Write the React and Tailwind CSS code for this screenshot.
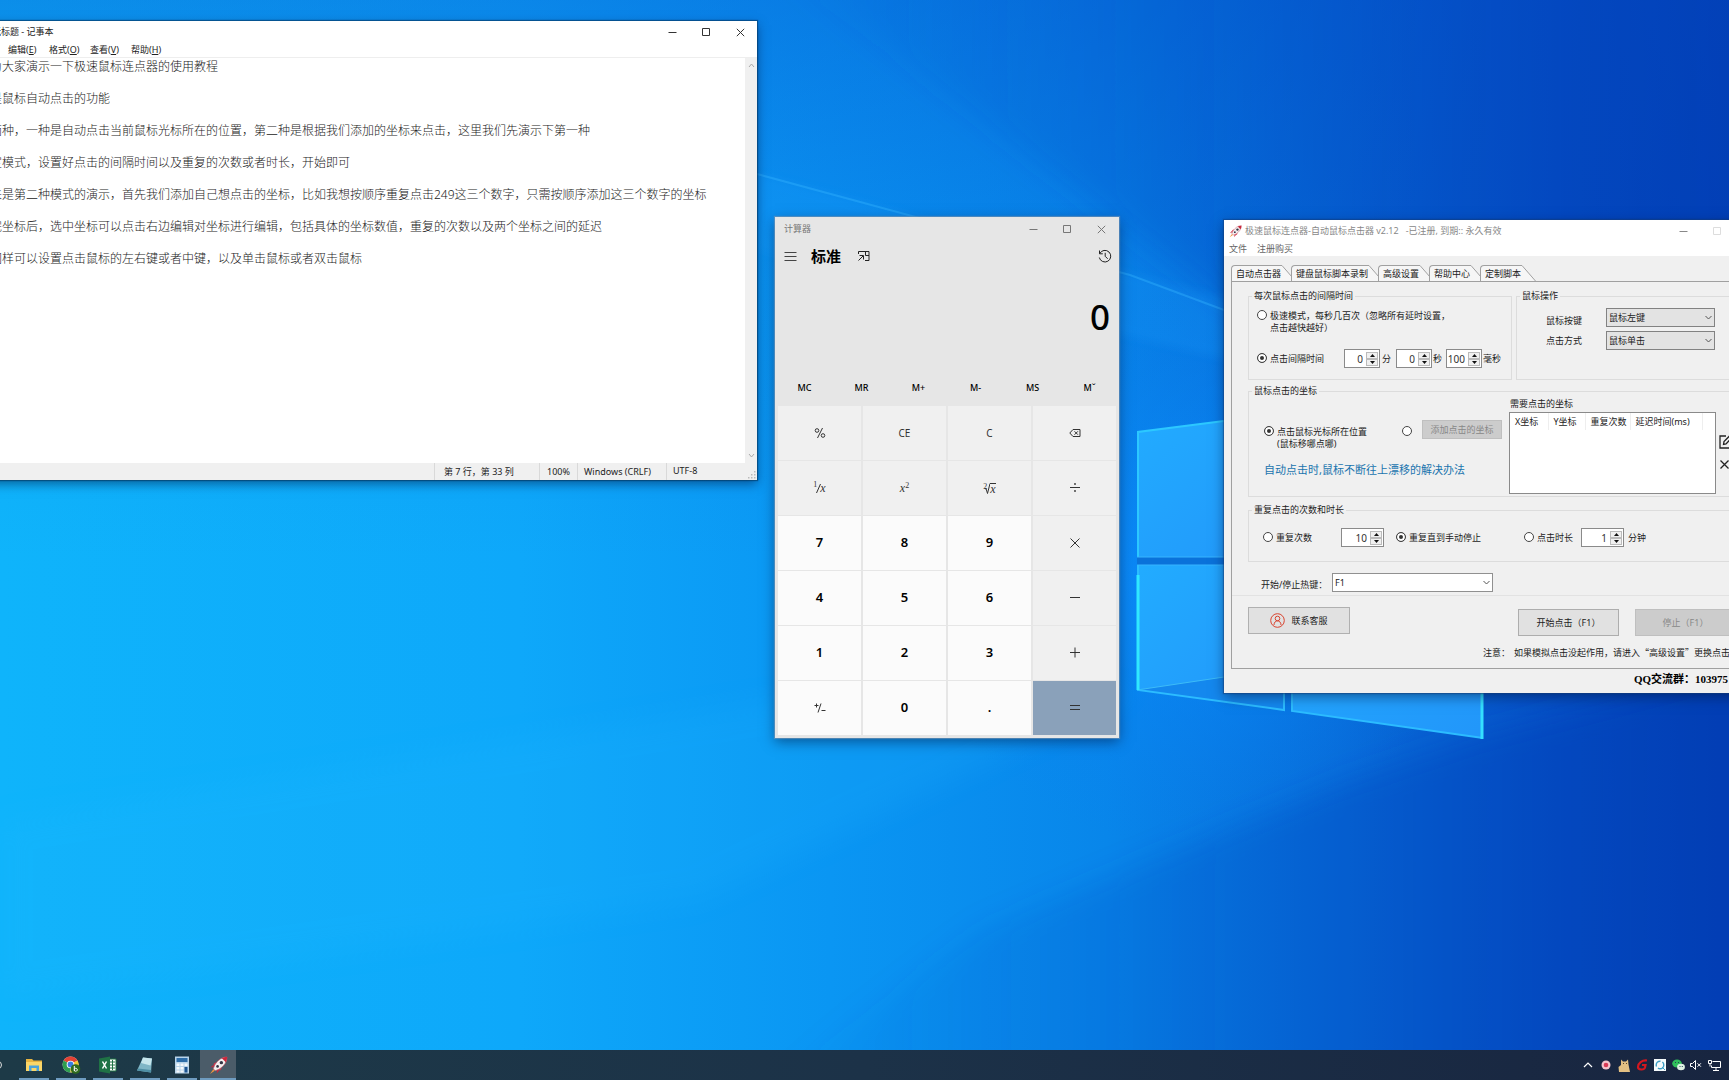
import React from "react";

const NOTE_TEXT = [
  "今天为大家演示一下极速鼠标连点器的使用教程",
  "首先是鼠标自动点击的功能",
  "分为两种，一种是自动点击当前鼠标光标所在的位置，第二种是根据我们添加的坐标来点击，这里我们先演示下第一种",
  "先选定模式，设置好点击的间隔时间以及重复的次数或者时长，开始即可",
  "接下来是第二种模式的演示，首先我们添加自己想点击的坐标，比如我想按顺序重复点击249这三个数字，只需按顺序添加这三个数字的坐标",
  "添加完坐标后，选中坐标可以点击右边编辑对坐标进行编辑，包括具体的坐标数值，重复的次数以及两个坐标之间的延迟",
  "我们同样可以设置点击鼠标的左右键或者中键，以及单击鼠标或者双击鼠标",
].join("\n\n");

function Wallpaper() {
  return (
    <svg
      className="absolute inset-0 h-full w-full"
      viewBox="0 0 1729 1050"
      preserveAspectRatio="xMidYMid slice"
      aria-hidden="true"
    >
      <defs>
        <linearGradient id="base" x1="0" y1="0" x2="1" y2="0">
          <stop offset="0" stopColor="#0fb4fb" />
          <stop offset="0.3" stopColor="#0ea8fa" />
          <stop offset="0.48" stopColor="#0a96f3" />
          <stop offset="0.64" stopColor="#0886ea" />
          <stop offset="0.78" stopColor="#076ad8" />
          <stop offset="0.9" stopColor="#0550c6" />
          <stop offset="1" stopColor="#0442b8" />
        </linearGradient>
        <linearGradient id="top" x1="0" y1="0" x2="0" y2="1">
          <stop offset="0" stopColor="#0550cc" stopOpacity="0.38" />
          <stop offset="0.5" stopColor="#0550cc" stopOpacity="0.1" />
          <stop offset="1" stopColor="#0550cc" stopOpacity="0" />
        </linearGradient>
        <radialGradient id="glow" cx="0.5" cy="0.5" r="0.5">
          <stop offset="0" stopColor="#0c8cff" stopOpacity="0.8" />
          <stop offset="1" stopColor="#0a80f0" stopOpacity="0" />
        </radialGradient>
        <linearGradient id="shade" x1="0" y1="0" x2="1" y2="0">
          <stop offset="0" stopColor="#0448c0" stopOpacity="0" />
          <stop offset="0.5" stopColor="#0448c0" stopOpacity="0.3" />
          <stop offset="1" stopColor="#0338ae" stopOpacity="0.5" />
        </linearGradient>
        <linearGradient id="pane" x1="0" y1="0" x2="1" y2="1">
          <stop offset="0" stopColor="#22acff" />
          <stop offset="1" stopColor="#2296fa" />
        </linearGradient>
        <filter id="soft" x="-10%" y="-10%" width="120%" height="120%">
          <feGaussianBlur stdDeviation="14" />
        </filter>
        <filter id="haze" x="-20%" y="-20%" width="140%" height="140%">
          <feGaussianBlur stdDeviation="4" />
        </filter>
      </defs>
      <rect width="1729" height="1050" fill="url(#base)" />
      <rect width="1729" height="560" fill="url(#top)" />
      <ellipse cx="1190" cy="570" rx="280" ry="280" fill="url(#glow)" />
      <polygon points="757,-40 1769,-40 1769,480 1224,300 900,60" fill="url(#shade)" filter="url(#soft)" />
      <polygon points="1484,735 1345,782 980,930 760,1090 1769,1090 1769,660" fill="url(#shade)" filter="url(#soft)" />
      <polygon points="757,174 1230,300 1230,360 757,250" fill="#1aa0ff" opacity="0.2" filter="url(#haze)" />
      <polyline points="757,174 1130,275 1224,310" fill="none" stroke="#35b4ff" strokeOpacity="0.4" strokeWidth="2" />
      <polygon points="0,820 775,700 1137,690 700,900 0,1000" fill="#20b8ff" opacity="0.16" filter="url(#soft)" />
      <polygon points="1137,432 1300,411 1300,557 1137,557" fill="url(#pane)" />
      <polygon points="1137,565 1284,565 1284,710 1137,690" fill="url(#pane)" />
      <polygon points="1292,565 1483,565 1483,738 1292,711" fill="url(#pane)" />
      <polygon points="1137,557 1300,557 1300,565 1137,565" fill="#0a72da" />
      <polygon points="1137,690 1224,677 1284,680 1284,710" fill="#1488ee" />
      <path d="M1137 690L1224 677" stroke="#3cbcf8" fill="none" />
      <path d="M1138 557V432L1224 421" stroke="#2cc8ff" strokeWidth="2" fill="none" />
      <path d="M1137 557H1224M1137 565H1224" stroke="#36b4ff" fill="none" />
      <path d="M1138 565V690L1284 710V680" stroke="#2cbcff" strokeWidth="2" fill="none" />
      <path d="M1292 680V711L1483 738" stroke="#2cbcff" strokeWidth="2" fill="none" />
      <path d="M1482 680V739" stroke="#34e0ff" strokeWidth="3" fill="none" />
      <path d="M1138 575V690" stroke="#30e8ff" strokeWidth="3" />
    </svg>
  );
}

function Caption({ tone = "text-[#333]", maxTone }) {
  const cell = "flex h-5 w-[34px] items-center justify-center";
  return (
    <div className={`flex ${tone}`}>
      <button className={cell} aria-label="最小化">
        <svg width="9" height="9" viewBox="0 0 9 9" stroke="currentColor" fill="none"><path d="M0.5 4.5h8" /></svg>
      </button>
      <button className={`${cell} ${maxTone || ""}`} aria-label="最大化">
        <svg width="9" height="9" viewBox="0 0 9 9" stroke="currentColor" fill="none"><path d="M0.5 0.5h7v7h-7z" /></svg>
      </button>
      <button className={cell} aria-label="关闭">
        <svg width="9" height="9" viewBox="0 0 9 9" stroke="currentColor" fill="none"><path d="M0.800 0.800l7.400 7.400M8.200 0.800L0.800 8.200" /></svg>
      </button>
    </div>
  );
}

function Notepad() {
  const menus = [["文件", "F"], ["编辑", "E"], ["格式", "O"], ["查看", "V"], ["帮助", "H"]];
  return (
    <section className="absolute top-[21px] -left-[38px] flex h-[459px] w-[795px] flex-col bg-white text-[9px] leading-3 text-[#222] shadow-[0_0_1px_1px_rgba(0,50,90,0.55),0_4px_10px_rgba(0,20,60,0.5)]">
      <header className="flex h-[22px] items-center">
        <svg className="mx-1.5" width="12" height="12" viewBox="0 0 12 12"><path d="M3 1h7l-1 9H1z" fill="#7cc4d8" /></svg>
        <h1 className="grow pl-1.5">无标题 - 记事本</h1>
        <Caption />
      </header>
      <nav className="flex h-[15px] items-center gap-[11px] border-b border-[#eee] pl-[5px]">
        {menus.map(([name, key]) => (
          <button key={key} className="w-[30px] text-left whitespace-nowrap">
            {name}(<u>{key}</u>)
          </button>
        ))}
      </nav>
      <div className="flex min-h-0 grow">
        <textarea
          aria-label="文本编辑器"
          defaultValue={NOTE_TEXT}
          wrap="off"
          className="grow resize-none overflow-hidden bg-white pt-px pl-1 text-xs leading-4 font-light text-[#1a1a1a] outline-none"
        />
        <div className="flex w-3 flex-col items-center justify-between bg-[#f0f0f0] py-1 text-[#aaa]">
          <svg width="7" height="7" viewBox="0 0 7 7" stroke="currentColor" fill="none"><path d="M1 5l2.500-3L6 5" /></svg>
          <svg width="7" height="7" viewBox="0 0 7 7" stroke="currentColor" fill="none"><path d="M1 2l2.500 3L6 2" /></svg>
        </div>
      </div>
      <footer className="flex h-[17px] items-stretch justify-end bg-[#f0f0f0] leading-[18px]">
        <span className="w-[105px] border-l border-[#d9d9d9] pl-[9px]">第 7 行，第 33 列</span>
        <span className="w-[38px] border-l border-[#d9d9d9] pl-[7px]">100%</span>
        <span className="w-[89px] border-l border-[#d9d9d9] pl-1.5">Windows (CRLF)</span>
        <span className="flex w-[91px] items-end justify-between border-l border-[#d9d9d9] pl-1.5">
          UTF-8
          <svg width="9" height="9" viewBox="0 0 9 9" fill="#bbb">
            <path d="M6 0h1.500v1.500H6zM3 3h1.500v1.500H3zM6 3h1.500v1.500H6zM0 6h1.500v1.500H0zM3 6h1.500v1.500H3zM6 6h1.500v1.500H6z" />
          </svg>
        </span>
      </footer>
    </section>
  );
}

const opIcon = (d) => (
  <svg width="12" height="12" viewBox="0 0 12 12" stroke="currentColor" strokeWidth="1" fill="none"><path d={d} /></svg>
);

const KEYS = [
  { n: "百分号", op: 1, c: <svg width="12" height="12" viewBox="0 0 12 12" stroke="currentColor" fill="none"><circle cx="3" cy="3.500" r="1.800" /><circle cx="9" cy="8.500" r="1.800" /><path d="M8.500 1L3.500 11" /></svg> },
  { n: "清除条目", op: 1, c: "CE" },
  { n: "清除", op: 1, c: "C" },
  { n: "退格", op: 1, c: <svg width="12" height="12" viewBox="0 0 12 12" stroke="currentColor" fill="none"><path d="M4 2.500h7v7H4L0.800 6zM5.500 4.300l3.400 3.400M8.900 4.300L5.500 7.700" /></svg> },
  { n: "倒数", op: 1, c: <span className="flex items-center font-['Liberation_Serif',serif]"><span className="self-start text-[8px] leading-[9px]">1</span><svg className="-ml-px" width="5" height="11" viewBox="0 0 5 11" stroke="currentColor" fill="none"><path d="M4.500 1L0.500 10" /></svg><i className="-ml-px text-xs">x</i></span> },
  { n: "平方", op: 1, c: <span className="font-['Liberation_Serif',serif]"><i className="text-xs">x</i><span className="align-[4px] text-[8px]">2</span></span> },
  { n: "平方根", op: 1, c: <span className="flex items-end font-['Liberation_Serif',serif]"><span className="self-start text-[8px] leading-[8px]">2</span><svg className="-ml-0.5" width="5" height="11" viewBox="0 0 5 11" stroke="currentColor" fill="none"><path d="M0 6l1-0.500 1.500 5L5 0.500" /></svg><i className="border-t border-current text-xs leading-[10px]">x</i></span> },
  { n: "除以", op: 1, c: <svg width="12" height="12" viewBox="0 0 12 12" fill="currentColor"><path d="M1 5h10v1H1z" /><circle cx="6" cy="2" r="0.900" /><circle cx="6" cy="9" r="0.900" /></svg> },
  { n: "7", c: "7" }, { n: "8", c: "8" }, { n: "9", c: "9" },
  { n: "乘以", op: 1, c: opIcon("M1.500 1.500l9 9M10.500 1.500l-9 9") },
  { n: "4", c: "4" }, { n: "5", c: "5" }, { n: "6", c: "6" },
  { n: "减", op: 1, c: opIcon("M1 5.500h10") },
  { n: "1", c: "1" }, { n: "2", c: "2" }, { n: "3", c: "3" },
  { n: "加", op: 1, c: opIcon("M1 5.500h10M6 0.500v10") },
  { n: "正负", c: <svg width="12" height="12" viewBox="0 0 12 12" stroke="#333" fill="none"><path d="M0.500 3.500h4M2.500 1.500v4M7 1.500L4 10.500M7.500 8.500h4" /></svg> },
  { n: "0", c: "0" }, { n: "小数点", c: "." },
  { n: "等于", eq: 1, c: opIcon("M1 3.500h10M1 7.500h10") },
];

function Calculator() {
  return (
    <section className="absolute top-[217px] left-[775px] flex h-[521px] w-[344px] flex-col bg-[#e6e6e6] px-px text-black shadow-[0_0_1px_1px_rgba(120,150,180,0.6),0_4px_12px_rgba(0,20,60,0.5)]">
      <header className="flex h-6 items-center pl-2">
        <h1 className="grow text-[9px] text-[#777]">计算器</h1>
        <Caption tone="text-[#777]" />
      </header>
      <div className="flex h-[30px] items-center pr-1.5 pl-2">
        <button aria-label="打开导航">
          <svg width="13" height="12" viewBox="0 0 13 12" stroke="#444" fill="none"><path d="M0.500 2.500h12M0.500 6.500h12M0.500 10.500h12" /></svg>
        </button>
        <h2 className="ml-3.5 text-[15px] leading-6 font-bold">标准</h2>
        <button className="ml-4" aria-label="始终置顶">
          <svg width="13" height="12" viewBox="0 0 13 12" stroke="#222" fill="none"><path d="M1.500 4V1.500H12v9H8M8.500 1.500v4H12M1.500 10.500L6 6M2.500 5.500h4V9.500" /></svg>
        </button>
        <button className="ml-auto" aria-label="历史记录">
          <svg width="14" height="14" viewBox="0 0 14 14" stroke="#222" fill="none"><path d="M1.800 4.500A5.800 5.800 0 1 1 1.300 8.500M1.500 1.500v3.300h3.300M7.200 3.800v3.500l2.500 2.500" /></svg>
        </button>
      </div>
      <output className="flex grow items-center justify-end pr-2 pb-2 text-[35px] leading-none font-medium">0</output>
      <div className="grid h-9 grid-cols-6 items-center text-[9px] font-medium">
        {["MC", "MR", "M+", "M-", "MS", "Mˇ"].map((m) => (
          <button key={m}>{m}</button>
        ))}
      </div>
      <div className="mx-0.5 mb-[3px] grid h-[329px] grid-cols-4 grid-rows-6 gap-x-0.5 gap-y-px">
        {KEYS.map((k) => (
          <button
            key={k.n}
            aria-label={k.n}
            className={`flex items-center justify-center ${
              k.eq ? "bg-[#8aa1ba] text-[#333]" : k.op ? "bg-[#f0f0f0] text-[10px] text-[#333]" : "bg-[#fbfbfb] text-[13px] font-semibold"
            }`}
          >
            {k.c}
          </button>
        ))}
      </div>
    </section>
  );
}

function Radio({ name, on, label, children, className = "" }) {
  return (
    <label className={`flex items-start gap-[3px] ${className}`}>
      <input
        type="radio"
        name={name}
        defaultChecked={on}
        aria-label={label}
        className="size-2.5 shrink-0 appearance-none rounded-full border border-[#444] bg-white checked:bg-[#333] checked:shadow-[inset_0_0_0_2px_white]"
      />
      {children}
    </label>
  );
}

function Spinner({ value, label, className = "w-9" }) {
  return (
    <span className={`flex h-[19px] items-center border border-[#8a8a8a] bg-white pr-px ${className}`}>
      <input aria-label={label} defaultValue={value} inputMode="numeric" className="w-0 min-w-0 grow bg-transparent pr-[3px] text-right text-[10px] leading-4 text-[#333] outline-none" />
      <span className="flex w-3 flex-col">
        {["M3.500 1L6 4H1z", "M3.500 4L6 1H1z"].map((d, i) => (
          <button key={d} aria-label={i ? "减少" : "增加"} className="flex h-[7px] items-center justify-center border border-[#bbb] bg-[#f0f0f0]">
            <svg width="7" height="5" viewBox="0 0 7 5" fill="#111"><path d={d} /></svg>
          </button>
        ))}
      </span>
    </span>
  );
}

function Select({ label, options, className }) {
  return (
    <span className={`relative flex h-[19px] ${className}`}>
      <select aria-label={label} className="w-full appearance-none border border-current/50 bg-inherit pl-0.5 text-[9px] leading-4 text-[#222] outline-none">
        {options.map((o) => (
          <option key={o}>{o}</option>
        ))}
      </select>
      <svg className="pointer-events-none absolute top-1.5 right-[3px]" width="7" height="7" viewBox="0 0 7 7" stroke="#555" fill="none"><path d="M0.500 2l3 3 3-3" /></svg>
    </span>
  );
}

function Group({ title, className, children }) {
  return (
    <fieldset className={`min-w-0 border border-[#dcdcdc] ${className}`}>
      <legend className="ml-[3px] px-0.5 leading-[10px]">{title}</legend>
      {children}
    </fieldset>
  );
}

function RocketIcon({ size }) {
  return (
    <svg width={size} height={size} viewBox="0 0 20 20">
      <path d="M5 9L1.500 12l3-0.500zM11 15l-3 3.500 0.500-3.500z" fill="#c8283c" />
      <path d="M5 8l2.500-1.500L5 13zM12 15l1.500-2.500L7 15z" fill="#d83048" />
      <path d="M19 1c-5 0-9.500 3-13 8.500L4.500 13.500 6.500 15.500l4-1.500C16 10.500 19 6 19 1z" fill="#f4f0f0" stroke="#c05060" strokeWidth="0.700" />
      <path d="M19 1c-2 0-4 0.500-5.500 1.300l4.200 4.200C18.600 5 19 3 19 1z" fill="#c8283c" />
      <circle cx="13" cy="7" r="1.800" fill="#334" />
      <circle cx="9" cy="11" r="1.400" fill="#334" />
      <path d="M4.500 14l-3.500 5 5-3.500z" fill="#f0963c" />
    </svg>
  );
}

function Clicker() {
  const tabs = ["自动点击器", "键盘鼠标脚本录制", "高级设置", "帮助中心", "定制脚本"];
  return (
    <section className="absolute top-[220px] left-[1224px] flex h-[473px] w-[544px] flex-col bg-[#f0f0f0] text-[9px] leading-3 text-[#222] shadow-[0_0_1px_1px_rgba(20,60,120,0.5),0_4px_12px_rgba(0,20,60,0.5)]">
      <header className="flex h-[22px] items-center bg-white pl-[5px] text-[#888]">
        <RocketIcon size={13} />
        <h1 className="grow pl-[3px] whitespace-pre">极速鼠标连点器-自动鼠标点击器 v2.12   -已注册, 到期:: 永久有效</h1>
        <Caption tone="text-[#888]" maxTone="text-[#ddd]" />
      </header>
      <nav className="flex h-3.5 items-center gap-2.5 bg-white pl-[5px] text-[#666]">
        <button>文件</button>
        <button>注册购买</button>
      </nav>
      <div className="mx-[7px] mt-[9px] flex h-4" role="tablist">
        {tabs.map((t, i) => (
          <div key={t} className={`flex ${i ? "-ml-[5px]" : ""}`}>
            <button role="tab" aria-selected={i === 0} className="rounded-tl-sm border-t border-l border-[#a0a0a0] bg-[#f6f6f6] pr-px pl-1 whitespace-nowrap">
              {t}
            </button>
            <svg width="14" height="16" viewBox="0 0 14 16"><path d="M0 0L14 16H0z" fill="#f6f6f6" /><path d="M0 0.500L13.500 16" stroke="#a0a0a0" fill="none" /></svg>
          </div>
        ))}
      </div>
      <div className="mx-[7px] flex h-[388px] flex-col border border-[#a0a0a0] pt-[9px]">
        <div className="flex h-[89px] gap-1 pr-3 pl-4">
          <Group title="每次鼠标点击的间隔时间" className="w-[264px]">
            <Radio name="speed" className="mt-[9px] ml-2">
              <span>
                极速模式，每秒几百次（忽略所有延时设置，
                <br />
                点击越快越好）
              </span>
            </Radio>
            <div className="mt-[15px] ml-2 flex items-center">
              <Radio name="speed" on className="w-[87px]">
                点击间隔时间
              </Radio>
              <Spinner value="0" label="分" />
              <span className="w-4 pl-0.5">分</span>
              <Spinner value="0" label="秒" />
              <span className="w-3.5 pl-px">秒</span>
              <Spinner value="100" label="毫秒" />
              <span className="pl-px">毫秒</span>
            </div>
          </Group>
          <Group title="鼠标操作" className="grow">
            <div className="mt-[7px] ml-[29px] flex flex-col gap-1">
              <label className="flex items-center">
                <span className="w-[60px] pt-1.5">鼠标按键</span>
                <Select label="鼠标按键" options={["鼠标左键", "鼠标右键", "鼠标中键"]} className="w-[109px] bg-[#e3e3e3] text-[#777]" />
              </label>
              <label className="flex items-center">
                <span className="w-[60px]">点击方式</span>
                <Select label="点击方式" options={["鼠标单击", "鼠标双击"]} className="w-[109px] bg-[#e3e3e3] text-[#777]" />
              </label>
            </div>
          </Group>
        </div>
        <div className="mt-1.5 flex h-[111px] pr-3 pl-4">
          <Group title="鼠标点击的坐标" className="grow">
            <div className="flex">
              <div className="w-[259px] pt-6 pl-[15px]">
                <div className="flex">
                  <Radio name="place" on className="mt-1.5 w-[138px]">
                    <span>
                      点击鼠标光标所在位置
                      <br />
                      (鼠标移哪点哪)
                    </span>
                  </Radio>
                  <Radio name="place" label="添加点击的坐标" className="mt-1.5 w-5" />
                  <button disabled className="h-[19px] w-20 border border-[#bfbfbf] bg-[#ccc] text-[#888]">
                    添加点击的坐标
                  </button>
                </div>
                <a href="#drift" className="mt-3 block text-[11px] leading-4 whitespace-nowrap text-[#1a74ae]">
                  自动点击时,鼠标不断往上漂移的解决办法
                </a>
              </div>
              <div className="w-[209px] pt-0.5 pl-px">
                <h3 className="mb-0.5 pl-px">需要点击的坐标</h3>
                <div className="h-[82px] w-[207px] border border-[#8a8a8a] bg-white">
                  <table className="w-full table-fixed border-collapse text-left">
                    <thead>
                      <tr className="h-[17px]">
                        {[["X坐标", "w-[38px]"], ["Y坐标", "w-[37px]"], ["重复次数", "w-[45px]"], ["延迟时间(ms)", "w-[72px]"]].map(([h, w]) => (
                          <th key={h} className={`border-r border-[#eee] pl-[5px] font-normal whitespace-nowrap ${w}`}>{h}</th>
                        ))}
                        <th />
                      </tr>
                    </thead>
                    <tbody />
                  </table>
                </div>
              </div>
              <div className="flex flex-col gap-2.5 pt-[38px] pl-0.5">
                <button aria-label="编辑">
                  <svg width="14" height="15" viewBox="0 0 14 15" stroke="#222" strokeWidth="1.300" fill="none"><path d="M7 2H1v12h11V8M4.500 10.500l0.500-3L11.500 1l2 2L7 10z" /></svg>
                </button>
                <button aria-label="删除">
                  <svg width="11" height="11" viewBox="0 0 11 11" stroke="#222" strokeWidth="1.300" fill="none"><path d="M1.500 1.500l8 8M9.500 1.500l-8 8" /></svg>
                </button>
              </div>
            </div>
          </Group>
        </div>
        <div className="mt-2 flex h-[57px] pr-3 pl-4">
          <Group title="重复点击的次数和时长" className="grow">
            <div className="mt-[13px] ml-3.5 flex items-center">
              <Radio name="repeat" className="w-[78px]">重复次数</Radio>
              <Spinner value="10" label="重复次数" className="w-[43px]" />
              <Radio name="repeat" on className="ml-3 w-32">重复直到手动停止</Radio>
              <Radio name="repeat" className="w-[57px]">点击时长</Radio>
              <Spinner value="1" label="点击时长" className="w-[43px]" />
              <span className="pl-1">分钟</span>
            </div>
          </Group>
        </div>
        <label className="mt-[11px] flex items-center border-b border-[#e2e2e2] pb-[3px] pl-[29px]">
          <span className="w-[71px] pt-1">开始/停止热键：</span>
          <Select label="开始/停止热键" options={["F1", "F2", "F3"]} className="w-[161px] bg-white text-[#444]" />
        </label>
        <div className="mt-[11px] flex pr-3 pl-4">
          <button className="flex h-[27px] w-[102px] items-center justify-center gap-1.5 border border-[#b0b0b0] bg-[#e1e1e1]">
            <svg width="15" height="15" viewBox="0 0 15 15" stroke="#d9432f" fill="none"><circle cx="7.500" cy="7.500" r="6.800" /><circle cx="7.500" cy="5.500" r="2.300" /><path d="M4 12c0-5.500 7-5.500 7 0" /></svg>
            联系客服
          </button>
          <button className="mt-0.5 ml-[168px] h-[27px] w-[101px] border border-[#adadad] bg-[#e1e1e1]">开始点击（F1）</button>
          <button disabled className="mt-0.5 ml-4 h-[27px] w-[101px] border border-[#bfbfbf] bg-[#ccc] text-[#888]">停止（F1）</button>
        </div>
        <p className="mt-[11px] ml-[251px] font-['Noto_Sans_CJK_SC',sans-serif] whitespace-pre">注意：  如果模拟点击没起作用，请进入“高级设置”更换点击模式</p>
      </div>
      <p className="mt-[3px] ml-[410px] font-['Liberation_Serif','Noto_Sans_CJK_SC',serif] text-[11px] leading-[14px] font-bold whitespace-nowrap text-black">QQ交流群：103975</p>
    </section>
  );
}

const APPS = [
  ["文件资源管理器", <svg width="18" height="18" viewBox="0 0 18 18"><path d="M1 3h6l1.500 1.500H17V15H1z" fill="#e8b440" /><path d="M1 6h16v9H1z" fill="#fbd668" /><path d="M4 15V9.500h10V15h-2.500v-3h-5v3z" fill="#4aa3dc" /></svg>],
  ["Chrome", <svg width="19" height="18" viewBox="0 0 19 18"><circle cx="8.500" cy="8.500" r="8" fill="#e6e6e6" /><path d="M8.500 8.500L1.600 4.500A8 8 0 0 1 15.500 4.500z" fill="#e34234" /><path d="M8.500 8.500L1.600 4.500A8 8 0 0 0 8.500 16.500z" fill="#2f9e50" /><path d="M8.500 8.500l7-4a8 8 0 0 1-7 12z" fill="#f6c62e" /><circle cx="8.500" cy="8.500" r="3.800" fill="#fff" /><circle cx="8.500" cy="8.500" r="2.900" fill="#3b7de0" /><circle cx="13.500" cy="13" r="4.800" fill="#2f6b1e" /><path d="M12.300 10v5.200M12.300 13.500a1.500 1.500 0 1 1 0 0.500" stroke="#fff" fill="none" /></svg>],
  ["Excel", <svg width="18" height="18" viewBox="0 0 18 18"><path d="M9 3h8v12H9z" fill="#fff" stroke="#1f7245" /><path d="M10 6h6M10 9h6M10 12h6M13.500 4v10" stroke="#1f7245" /><path d="M0 2.500L11 0.500v17L0 15.500z" fill="#1f7245" /><path d="M3.500 5.500l4 7M7.500 5.500l-4 7" stroke="#fff" strokeWidth="1.500" /></svg>],
  ["记事本", <svg width="18" height="18" viewBox="0 0 18 18"><path d="M7 1.500l9 1-1 14-14-2z" fill="#7fb6c6" /><path d="M7 1.500l9 1-1.500 7L5 7z" fill="#c6e6ec" /><path d="M1 14.500l14 2 0.200-2.500L2 12.500z" fill="#4f8fa4" /></svg>],
  ["计算器", <svg width="16" height="18" viewBox="0 0 16 18"><path d="M1 0.500h14v17H1z" fill="#b8d4ea" /><path d="M2.500 2h11v4h-11z" fill="#2d6da8" /><path d="M2.500 7.500h3v2.500h-3zM6.500 7.500h3v2.500h-3zM2.500 11h3v2.500h-3zM6.500 11h3v2.500h-3zM2.500 14.500h3v2h-3zM6.500 14.500h3v2h-3z" fill="#f4f8fb" /><path d="M10.500 7.500h3v2.500h-3z" fill="#f4f8fb" /><path d="M10.500 11h3v5.500h-3z" fill="#1d5592" /></svg>],
  ["极速鼠标连点器", <RocketIcon size={19} />],
];

const TRAY = [
  ["显示隐藏的图标", <svg width="10" height="8" viewBox="0 0 10 8" stroke="#fff" strokeWidth="1.200" fill="none"><path d="M1 6l4-4 4 4" /></svg>],
  ["录制", <svg width="10" height="10" viewBox="0 0 10 10"><circle cx="5" cy="5" r="4.500" fill="#f3c4cc" /><circle cx="5" cy="5" r="2.300" fill="#d83a56" /></svg>],
  ["猫", <svg width="12" height="13" viewBox="0 0 12 13"><path d="M3 0.500l2 2h3l2-2 0.500 5L12 13H1L0.500 8 3 6z" fill="#e3c083" /><path d="M5 4.500h1M8 4.500h1" stroke="#59422a" /></svg>],
  ["安全", <svg width="12" height="12" viewBox="0 0 12 12" stroke="#d3171f" strokeWidth="2.200" fill="none"><path d="M11 1.500C6 1 2 4 2 8c0 3 6 3.500 7 0.500L9.500 6H6" /></svg>],
  ["同步", <svg width="12" height="12" viewBox="0 0 12 12"><path d="M0 0h12v12H0z" fill="#f5fafc" /><circle cx="6" cy="6" r="3.800" stroke="#3b9ec6" strokeWidth="1.400" fill="none" strokeDasharray="8 2" /><path d="M8 8l3 3" stroke="#3b9ec6" /></svg>],
  ["微信", <svg width="13" height="12" viewBox="0 0 13 12"><ellipse cx="5" cy="4.500" rx="4.800" ry="4" fill="#2fbf5b" /><ellipse cx="9" cy="8" rx="3.900" ry="3.200" fill="#dff3e4" /><path d="M3 3.500h1M6 3.500h1M7.500 7.500h1M9.800 7.500h1" stroke="#245" /></svg>],
  ["静音", <svg width="12" height="12" viewBox="0 0 12 12" stroke="#fff" fill="none"><path d="M0.500 4.500h2L5.500 1.500v9L2.500 7.500h-2zM7.500 4.300l3.400 3.400M10.900 4.300L7.500 7.700" /></svg>],
  ["网络", <svg width="13" height="12" viewBox="0 0 13 12" stroke="#fff" fill="none"><path d="M4.500 2.500h8v6h-9V6.500M5 11.500h6M8 8.500v3M0.500 1.500h3v3h-3zM2 4.500v3" /></svg>],
];

function Taskbar() {
  return (
    <footer className="relative flex h-[30px] shrink-0 items-stretch overflow-hidden bg-linear-to-r from-[#1d3a47] via-[#1c3248] to-[#182540]">
      <button className="-ml-1 flex w-5 items-center" aria-label="搜索">
        <svg width="8" height="10" viewBox="0 0 8 10" stroke="#ddd" fill="none"><circle cx="2" cy="5" r="3.500" /></svg>
      </button>
      {APPS.map(([name, icon], i) => (
        <button
          key={name}
          aria-label={name}
          className={`flex w-9 flex-col items-center justify-between pt-1.5 ${i === 5 ? "bg-[#4b5c69]" : ""} ${i && i < 5 ? "ml-px" : ""}`}
        >
          {icon}
          <span className={`h-0.5 bg-[#6f9cc0] ${i === 5 ? "w-9" : "w-[30px]"}`} />
        </button>
      ))}
      <div className="-mr-3 ml-auto flex items-center">
        {TRAY.map(([name, icon]) => (
          <button key={name} aria-label={name} className="flex w-[18px] justify-center">
            {icon}
          </button>
        ))}
        <button className="flex w-[18px] justify-center" aria-label="输入法">
          <svg width="12" height="12" viewBox="0 0 12 12" stroke="#fff" fill="none"><circle cx="8" cy="6" r="4.500" /></svg>
        </button>
      </div>
    </footer>
  );
}

export default function App() {
  return (
    <div className="flex h-screen flex-col overflow-hidden bg-[#0a90f3] font-['Noto_Sans','Noto_Sans_CJK_SC',sans-serif]">
      <main className="relative min-h-0 grow overflow-hidden">
        <Wallpaper />
        <Notepad />
        <Calculator />
        <Clicker />
      </main>
      <Taskbar />
    </div>
  );
}
